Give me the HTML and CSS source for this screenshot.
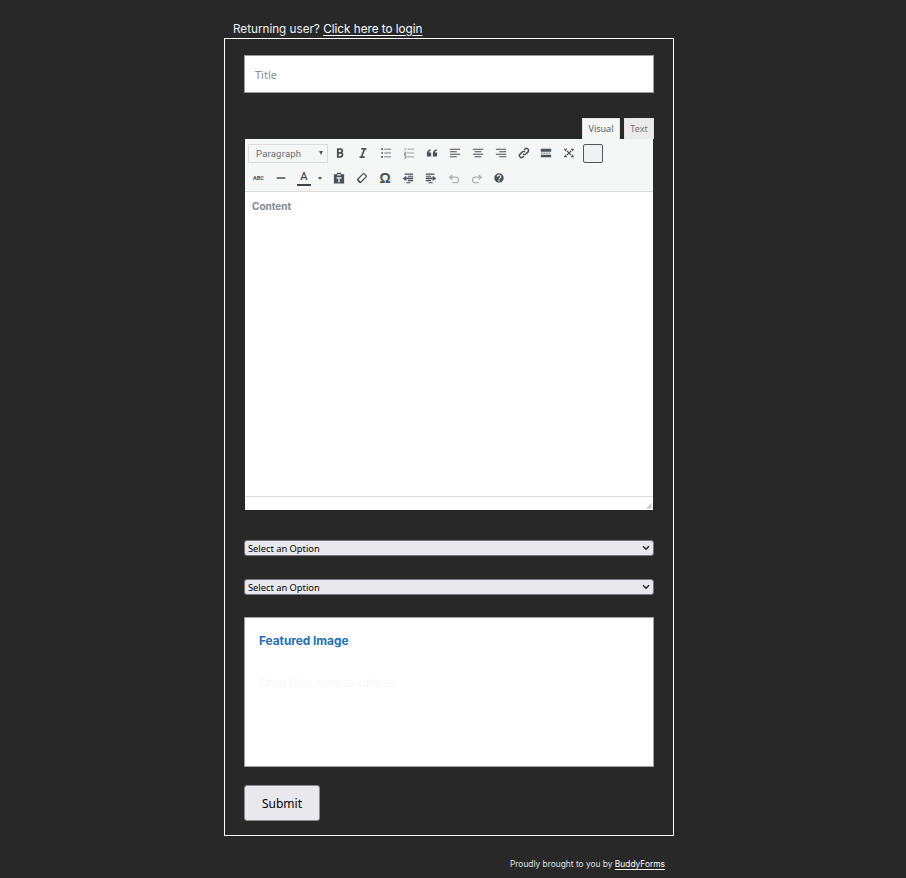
FILE: index.html
```html
<!DOCTYPE html>
<html lang="en">
<head>
<meta charset="utf-8">
<title>Submit</title>
<link rel="stylesheet" href="styles.css">
</head>
<body>
<div class="page">
  <p class="login">Returning user? <a href="#">Click here to login</a></p>
  <form class="form">
    <input class="title" type="text" placeholder="Title">
    <div class="tabs"><span class="tab active">Visual</span><span class="tab">Text</span></div>
    <div class="editor">
      <div class="toolbar">
        <div class="row">
          <div class="format"><span>Paragraph</span><i class="caret"></i></div>
          <span class="btn"><svg viewBox="0 0 14 14"><path class="s" stroke-width="2.200" d="M4.500 2.500h3a2.100 2.100 0 0 1 0 4.300h-3M4.500 6.800h3.500a2.400 2.400 0 0 1 0 4.700H4.500M4.500 1.500v11"/></svg></span>
          <span class="btn"><svg viewBox="0 0 14 14"><path class="s" stroke-width="1.800" d="M5 2.200h6M3 11.800h6M8.800 2.200 5.200 11.800"/></svg></span>
          <span class="btn"><svg viewBox="0 0 14 14"><path class="s" stroke-width="1" opacity=".85" d="M5 2.500h8M5 7h8M5 11.500h8"/><path class="d" d="M1.500 1.500h2v2h-2zM1.500 6h2v2h-2zM1.500 10.500h2v2h-2z"/></svg></span>
          <span class="btn"><svg viewBox="0 0 14 14"><path class="s" stroke-width="1" opacity=".6" d="M5 2.500h8M5 7h8M5 11.500h8M2.500 1v3M1.500 6h2v1.500h-2V9h2M1.500 10h2v3h-2M2 11.500h1.500"/></svg></span>
          <span class="btn"><svg viewBox="0 0 14 14"><path class="d" d="M1 11V7.500C1 5 2.500 3.200 5.500 2.700v1.700C4 4.800 3.400 5.500 3.300 6.500H6V11zM8 11V7.500C8 5 9.500 3.200 12.500 2.700v1.700C11 4.800 10.400 5.500 10.300 6.500H13V11z"/></svg></span>
          <span class="btn"><svg viewBox="0 0 14 14"><path class="s" stroke-width="1.200" d="M1 2.500h12M1 5.500h8M1 8.500h12M1 11.500h8"/></svg></span>
          <span class="btn"><svg viewBox="0 0 14 14"><path class="s" stroke-width="1.200" d="M1 2.500h12M3 5.500h8M1 8.500h12M3 11.500h8"/></svg></span>
          <span class="btn"><svg viewBox="0 0 14 14"><path class="s" stroke-width="1.200" d="M1 2.500h12M5 5.500h8M1 8.500h12M5 11.500h8"/></svg></span>
          <span class="btn"><svg viewBox="0 0 14 14"><path class="s" stroke-width="1.700" d="M5.800 8.200a2.300 2.300 0 0 0 3.300 0l2.500-2.500a2.300 2.300 0 0 0-3.300-3.300L7.200 3.500M8.200 5.800a2.300 2.300 0 0 0-3.300 0L2.400 8.300a2.300 2.300 0 0 0 3.300 3.300l1.100-1.100"/></svg></span>
          <span class="btn"><svg viewBox="0 0 14 14"><path class="d" d="M1 2h12v3.500H1zM1 9h12v3H1z"/><path class="s" stroke-width="1" stroke-dasharray="2 1" d="M1 7.200h12"/></svg></span>
          <span class="btn"><svg viewBox="0 0 14 14"><path class="s" stroke-width="1.400" d="M4.500 4.500 9.500 9.500M9.500 4.500 4.500 9.500"/><path class="d" d="M1 2h4L2.800 5.200zM13 2H9l2.200 3.200zM1 12h4l-2.200-3.200zM13 12H9l2.200-3.200z"/></svg></span>
          <span class="kitchen"></span>
        </div>
        <div class="row second">
          <span class="btn"><span class="abc">ABC</span></span>
          <span class="btn"><svg viewBox="0 0 14 14"><path class="s" stroke-width="1.800" d="M2 7h10"/></svg></span>
          <span class="color"><span class="color-a">A</span><i class="caret small"></i></span>
          <span class="btn"><svg viewBox="0 0 14 14"><path class="d" fill-rule="evenodd" d="M1 2.500h3.500V1h5v1.500H13V13.500H1zM5 2.500v1.500h4V2.500zM4 6v1.500h2.200V12h1.600V7.500H10V6z"/></svg></span>
          <span class="btn"><svg viewBox="0 0 14 14"><path fill="#fff" stroke="#4a5159" stroke-width="1.500" d="M2 8.500 8.300 2.200a1 1 0 0 1 1.400 0l2.100 2.100a1 1 0 0 1 0 1.400L5.500 12H4.300z"/><path class="d" d="M2.300 8.200 5.800 11.700 4.800 12.600H3.800L1.400 10z"/></svg></span>
          <span class="btn"><span class="omega">Ω</span></span>
          <span class="btn"><svg viewBox="0 0 14 14"><path class="s" stroke-width="1.300" d="M3 2.500h10M7 5h6M7 10h6M5 12.500h5"/><path class="s" stroke-width="2" d="M5 7.500h8"/><path class="d" d="M5 4.500v6L.8 7.500z"/></svg></span>
          <span class="btn"><svg viewBox="0 0 14 14"><path class="s" stroke-width="1.300" d="M1 2.500h10M1 5h6M1 10h6M4 12.500h5"/><path class="s" stroke-width="2" d="M1 7.500h8"/><path class="d" d="M9 4.500v6l4.200-3z"/></svg></span>
          <span class="btn faded"><svg viewBox="0 0 14 14"><path class="s" stroke-width="1.400" d="M3 6h6a3.200 3.200 0 0 1 0 6.500H5"/><path class="d" d="M5 2.500v7L.8 6z"/></svg></span>
          <span class="btn faded"><svg viewBox="0 0 14 14"><path class="s" stroke-width="1.400" d="M11 6H5a3.200 3.200 0 0 0 0 6.500h4"/><path class="d" d="M9 2.500v7L13.200 6z"/></svg></span>
          <span class="btn"><svg viewBox="0 0 14 14"><circle class="d" cx="7" cy="7" r="5.500"/><path d="M5 5.600a2 2 0 1 1 3 1.700c-.7.400-1 .7-1 1.500" fill="none" stroke="#f5f6f6" stroke-width="1.300"/><path d="M6.200 9.500h1.600v1.500H6.200z" fill="#f5f6f6"/></svg></span>
        </div>
      </div>
      <div class="content">Content</div>
      <div class="status"><svg class="grip" viewBox="0 0 7 7"><path d="M6.500 1v5.500H1zM6.500 3.500v3H3.500z" fill="#cfc8c8"/></svg></div>
    </div>
    <div class="select-wrap">
      <select class="choice"><option>Select an Option</option></select>
      <svg class="chevron" viewBox="0 0 8 6"><path d="M1 1.200 4 4.200 7 1.200" fill="none" stroke="#222" stroke-width="1.500"/></svg>
    </div>
    <div class="select-wrap">
      <select class="choice"><option>Select an Option</option></select>
      <svg class="chevron" viewBox="0 0 8 6"><path d="M1 1.200 4 4.200 7 1.200" fill="none" stroke="#222" stroke-width="1.500"/></svg>
    </div>
    <div class="featured">
      <h2>Featured Image</h2>
      <p>Drop files here to upload</p>
    </div>
    <button class="submit" type="button">Submit</button>
  </form>
  <p class="credit">Proudly brought to you by <a href="#">BuddyForms</a></p>
</div>
</body>
</html>
```
FILE: styles.css
```css
* { box-sizing: border-box; }
html, body { margin: 0; padding: 0; }
body { background: #282828; color: #fff; font-family: Inter, sans-serif; height: 878px; overflow: hidden; }
.page { width: 450px; margin-left: 224px; padding-top: 20px; }
a { color: #fff; text-decoration: underline; text-underline-offset: 2px; }
.login { margin: 0 0 0 9px; font-size: 11.700px; line-height: 18px; color: #f0f0f0; }
.form { display: flex; flex-direction: column; height: 798px; border: 1px solid #fff; padding: 16px 19px 0; }
.title { height: 38px; width: 410px; background: #fff; border: 1px solid #9a9a9a; padding: 0 10px; font: 11px "Noto Sans", sans-serif; color: #333; border-radius: 0; outline: 0; }
.title::placeholder { color: #8a8f94; opacity: 1; }
.tabs { display: flex; justify-content: flex-end; gap: 4px; margin-top: 25px; height: 21px; }
.tab { height: 21px; background: #ebebeb; color: #72777c; font: 9px/19px "Noto Sans", sans-serif; text-align: center; border: 1px solid #e2e2e2; border-bottom: 0; }
.tab.active { background: #f5f6f6; color: #555d66; width: 38px; }
.tab:not(.active) { width: 30px; }
.editor { width: 408px; height: 371px; margin-left: 1px; background: #fff; display: flex; flex-direction: column; }
.toolbar { height: 53px; background: #f5f6f6; border-bottom: 1px solid #dcdcde; padding: 4px 0 0 3px; }
.row { display: flex; align-items: center; height: 20px; }
.second { height: 24px; margin-top: 3px; margin-left: -1px; }
.format { width: 80px; height: 19px; border: 1px solid #dcdcde; background: #f5f6f6; display: flex; align-items: center; justify-content: space-between; padding: 0 4px 0 7px; font: 400 9.500px Roboto, sans-serif; letter-spacing: .2px; color: #666c72; margin-right: 1px; }
.caret { width: 0; height: 0; border-left: 2.500px solid transparent; border-right: 2.500px solid transparent; border-top: 4px solid #50575e; }
.caret.small { margin-left: 7px; border-top-width: 3px; }
.btn { width: 22.900px; height: 20px; flex: none; display: flex; align-items: center; justify-content: center; }
.btn svg { width: 12px; height: 12px; }
.faded { opacity: .4; }
.s { fill: none; stroke: #4a5159; }
.d { fill: #4a5159; }
.kitchen { width: 20px; height: 19px; margin-left: 2px; border: 1px solid #50575e; border-radius: 2px; background: #f0f2f2; }
.abc { font: 700 5.500px Roboto, sans-serif; color: #4a5159; letter-spacing: 0; }
.color { width: 35px; height: 20px; flex: none; display: flex; align-items: center; padding-left: 4px; }
.color-a { display: block; width: 14px; height: 15px; border-bottom: 2px solid #40464d; font: 500 11px/12px Roboto, sans-serif; color: #4a5159; text-align: center; }
.omega { font: 700 14px/1 "Liberation Sans", sans-serif; color: #4a5159; }
.content { flex: 1; padding: 7px 7px; font: 700 10px/14px Inter, sans-serif; color: #7e8993; }
.status { height: 14px; border-top: 1px solid #dcdcde; display: flex; justify-content: flex-end; align-items: flex-end; padding: 0 1px 1px 0; }
.grip { width: 7px; height: 7px; }
.select-wrap { position: relative; height: 16px; width: 410px; }
.chevron { position: absolute; right: 4px; top: 5px; width: 8px; height: 6px; pointer-events: none; }
.choice { display: block; appearance: none; width: 410px; height: 16px; background: #e9e8ed; border: 1px solid #76757f; border-radius: 3px; font: 9.300px "Noto Sans", sans-serif; color: #000; padding: 0 0 0 3px; }
.editor + .select-wrap { margin-top: 30px; }
.select-wrap + .select-wrap { margin-top: 23px; }
.featured { height: 150px; margin-top: 22px; background: #fff; border: 1px solid #a0a0a0; padding: 15px 14px; }
.featured h2 { margin: 0; font: 700 11.800px/17px Inter, sans-serif; color: #2271b1; }
.featured p { margin: 25px 0 0; font: 400 11.800px/17px Inter, sans-serif; color: #f6f7f7; }
.submit { align-self: flex-start; width: 76px; height: 36px; margin-top: 18px; background: #e9e8ed; border: 1px solid #8a8a92; border-radius: 3px; color: #000; font: 12px "Noto Sans", sans-serif; padding: 0; }
.credit { margin: 21px 9px 0 0; text-align: right; font-size: 8.400px; line-height: 14px; color: #e0e0e0; }
```
